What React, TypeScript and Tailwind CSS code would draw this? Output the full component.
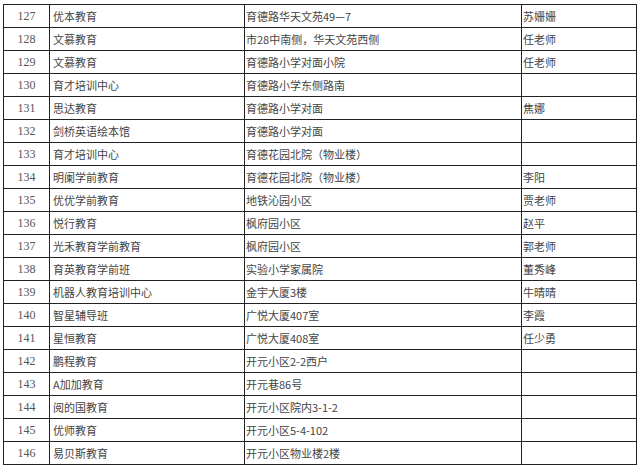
const rows: [string, string, string, string][] = [
  ["127", "优本教育", "育德路华天文苑49—7", "苏姗姗"],
  ["128", "文慕教育", "市28中南侧，华天文苑西侧", "任老师"],
  ["129", "文慕教育", "育德路小学对面小院", "任老师"],
  ["130", "育才培训中心", "育德路小学东侧路南", ""],
  ["131", "思达教育", "育德路小学对面", "焦娜"],
  ["132", "剑桥英语绘本馆", "育德路小学对面", ""],
  ["133", "育才培训中心", "育德花园北院（物业楼）", ""],
  ["134", "明阑学前教育", "育德花园北院（物业楼）", "李阳"],
  ["135", "优优学前教育", "地铁沁园小区", "贾老师"],
  ["136", "悦行教育", "枫府园小区", "赵平"],
  ["137", "光禾教育学前教育", "枫府园小区", "郭老师"],
  ["138", "育英教育学前班", "实验小学家属院", "董秀峰"],
  ["139", "机器人教育培训中心", "金宇大厦3楼", "牛晴晴"],
  ["140", "智星辅导班", "广悦大厦407室", "李霞"],
  ["141", "星恒教育", "广悦大厦408室", "任少勇"],
  ["142", "鹏程教育", "开元小区2-2西户", ""],
  ["143", "A加加教育", "开元巷86号", ""],
  ["144", "阅的国教育", "开元小区院内3-1-2", ""],
  ["145", "优师教育", "开元小区5-4-102", ""],
  ["146", "易贝斯教育", "开元小区物业楼2楼", ""],
];

export default function App() {
  return (
    <div className="w-[640px] h-[469px] bg-white overflow-hidden font-['Noto_Sans_CJK_SC','Noto_Sans',sans-serif] text-[11px] text-[#444]">
      <div className="ml-[3px] mt-[4px] w-[634px] border-l border-t border-[#222]">
        {rows.map(([no, name, addr, contact]) => (
          <div key={no} className="flex h-[23px]">
            <div className="w-[46px] flex items-center justify-center border-r border-b border-[#222] font-['Liberation_Serif',serif] text-[12px] text-[#555]">
              {no}
            </div>
            <div className="w-[195px] flex items-center pl-[3px] border-r border-b border-[#222]">
              {name}
            </div>
            <div className="w-[277px] flex items-center pl-[1px] border-r border-b border-[#222]">
              {addr}
            </div>
            <div className="w-[115px] flex items-center pl-[1px] border-r border-b border-[#222]">
              {contact}
            </div>
          </div>
        ))}
      </div>
    </div>
  );
}
